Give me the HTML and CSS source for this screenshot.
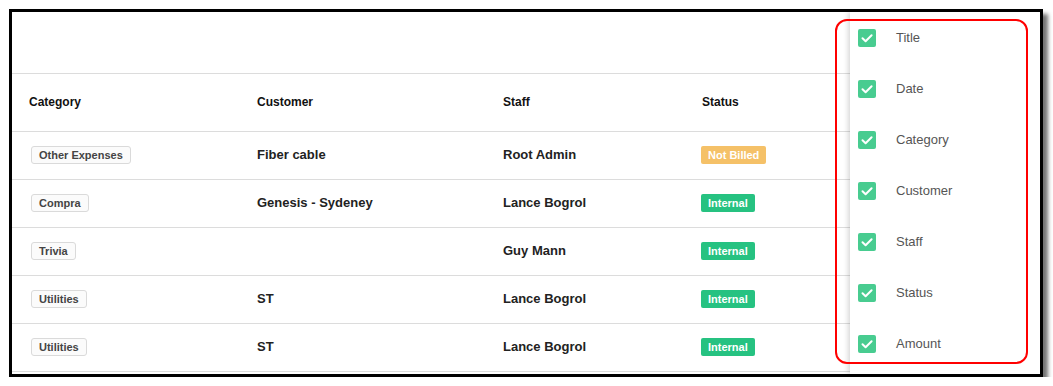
FILE: index.html
```html
<!DOCTYPE html>
<html>
<head>
<meta charset="utf-8">
<link rel="stylesheet" href="styles.css">
</head>
<body>
<div class="frame">
  <div class="toolbar"></div>
  <div class="table">
    <div class="row head">
      <div>Category</div><div>Customer</div><div>Staff</div><div>Status</div><div></div>
    </div>
    <div class="row">
      <div><span class="tag">Other Expenses</span></div>
      <div class="strong">Fiber cable</div>
      <div class="strong">Root Admin</div>
      <div><span class="status warn">Not Billed</span></div><div></div>
    </div>
    <div class="row">
      <div><span class="tag">Compra</span></div>
      <div class="strong">Genesis - Sydeney</div>
      <div class="strong">Lance Bogrol</div>
      <div><span class="status ok">Internal</span></div><div></div>
    </div>
    <div class="row">
      <div><span class="tag">Trivia</span></div>
      <div class="strong"></div>
      <div class="strong">Guy Mann</div>
      <div><span class="status ok">Internal</span></div><div></div>
    </div>
    <div class="row">
      <div><span class="tag">Utilities</span></div>
      <div class="strong">ST</div>
      <div class="strong">Lance Bogrol</div>
      <div><span class="status ok">Internal</span></div><div></div>
    </div>
    <div class="row">
      <div><span class="tag">Utilities</span></div>
      <div class="strong">ST</div>
      <div class="strong">Lance Bogrol</div>
      <div><span class="status ok">Internal</span></div><div></div>
    </div>
  </div>

  <div class="menu">
    <label class="item"><svg class="cb" viewBox="0 0 18 18"><rect width="18" height="18" rx="2"/><path d="M4.5 9.2 L7.6 12.2 L13.6 6.2"/></svg><span>Title</span></label>
    <label class="item"><svg class="cb" viewBox="0 0 18 18"><rect width="18" height="18" rx="2"/><path d="M4.5 9.2 L7.6 12.2 L13.6 6.2"/></svg><span>Date</span></label>
    <label class="item"><svg class="cb" viewBox="0 0 18 18"><rect width="18" height="18" rx="2"/><path d="M4.5 9.2 L7.6 12.2 L13.6 6.2"/></svg><span>Category</span></label>
    <label class="item"><svg class="cb" viewBox="0 0 18 18"><rect width="18" height="18" rx="2"/><path d="M4.5 9.2 L7.6 12.2 L13.6 6.2"/></svg><span>Customer</span></label>
    <label class="item"><svg class="cb" viewBox="0 0 18 18"><rect width="18" height="18" rx="2"/><path d="M4.5 9.2 L7.6 12.2 L13.6 6.2"/></svg><span>Staff</span></label>
    <label class="item"><svg class="cb" viewBox="0 0 18 18"><rect width="18" height="18" rx="2"/><path d="M4.5 9.2 L7.6 12.2 L13.6 6.2"/></svg><span>Status</span></label>
    <label class="item"><svg class="cb" viewBox="0 0 18 18"><rect width="18" height="18" rx="2"/><path d="M4.5 9.2 L7.6 12.2 L13.6 6.2"/></svg><span>Amount</span></label>
  </div>
  <div class="highlight"></div>
</div>
</body>
</html>
```

FILE: styles.css
```css
html, body {
  margin: 0;
  padding: 0;
  background: #fff;
}
body {
  font-family: "Liberation Sans", Arial, sans-serif;
}
.frame {
  position: relative;
  margin: 9px 0 0 9px;
  width: 1028px;
  height: 362px;
  border: 3px solid #000;
  background: #fff;
  box-shadow: 5px 5px 4px rgba(0, 0, 0, 0.55);
  overflow: hidden;
}
.toolbar {
  height: 61px;
  border-bottom: 1px solid #dcdcdc;
}
.row {
  display: grid;
  grid-template-columns: 228px 246px 199px 1fr 0;
  align-items: center;
  padding-left: 17px;
  padding-bottom: 2px;
  height: 45px;
  border-bottom: 1px solid #dcdcdc;
  font-size: 13px;
  color: #222;
}
.row.head {
  height: 55px;
  font-size: 12px;
  font-weight: bold;
  color: #111;
}
.strong {
  font-weight: bold;
  color: #222;
}
.tag {
  display: inline-block;
  margin-left: 2px;
  height: 16px;
  line-height: 16px;
  padding: 0 7px;
  border: 1px solid #dadada;
  border-radius: 3px;
  background: #fbfbfb;
  color: #444;
  font-size: 11px;
  font-weight: bold;
}
.status {
  display: inline-block;
  margin-left: -1px;
  height: 18px;
  line-height: 18px;
  padding: 0 7px;
  border-radius: 2px;
  color: #fff;
  font-size: 11px;
  font-weight: bold;
}
.status.warn { background: #f5c168; }
.status.ok { background: #26c281; }

.menu {
  position: absolute;
  top: 0;
  left: 838px;
  right: 0;
  bottom: 0;
  background: #fff;
  box-shadow: -2px 0 5px rgba(0, 0, 0, 0.16);
  display: flex;
  flex-direction: column;
}
.item {
  display: flex;
  align-items: center;
  height: 51px;
  padding-left: 8px;
  gap: 20px;
  font-size: 13px;
  color: #555;
}
.cb {
  width: 18px;
  height: 18px;
  flex: none;
}
.cb rect { fill: #48cc90; }
.cb path {
  fill: none;
  stroke: #fff;
  stroke-width: 2;
  stroke-linecap: round;
  stroke-linejoin: round;
}
.highlight {
  position: absolute;
  left: 823px;
  top: 7px;
  width: 189px;
  height: 341px;
  border: 2px solid #f00;
  border-radius: 12px;
}
```
